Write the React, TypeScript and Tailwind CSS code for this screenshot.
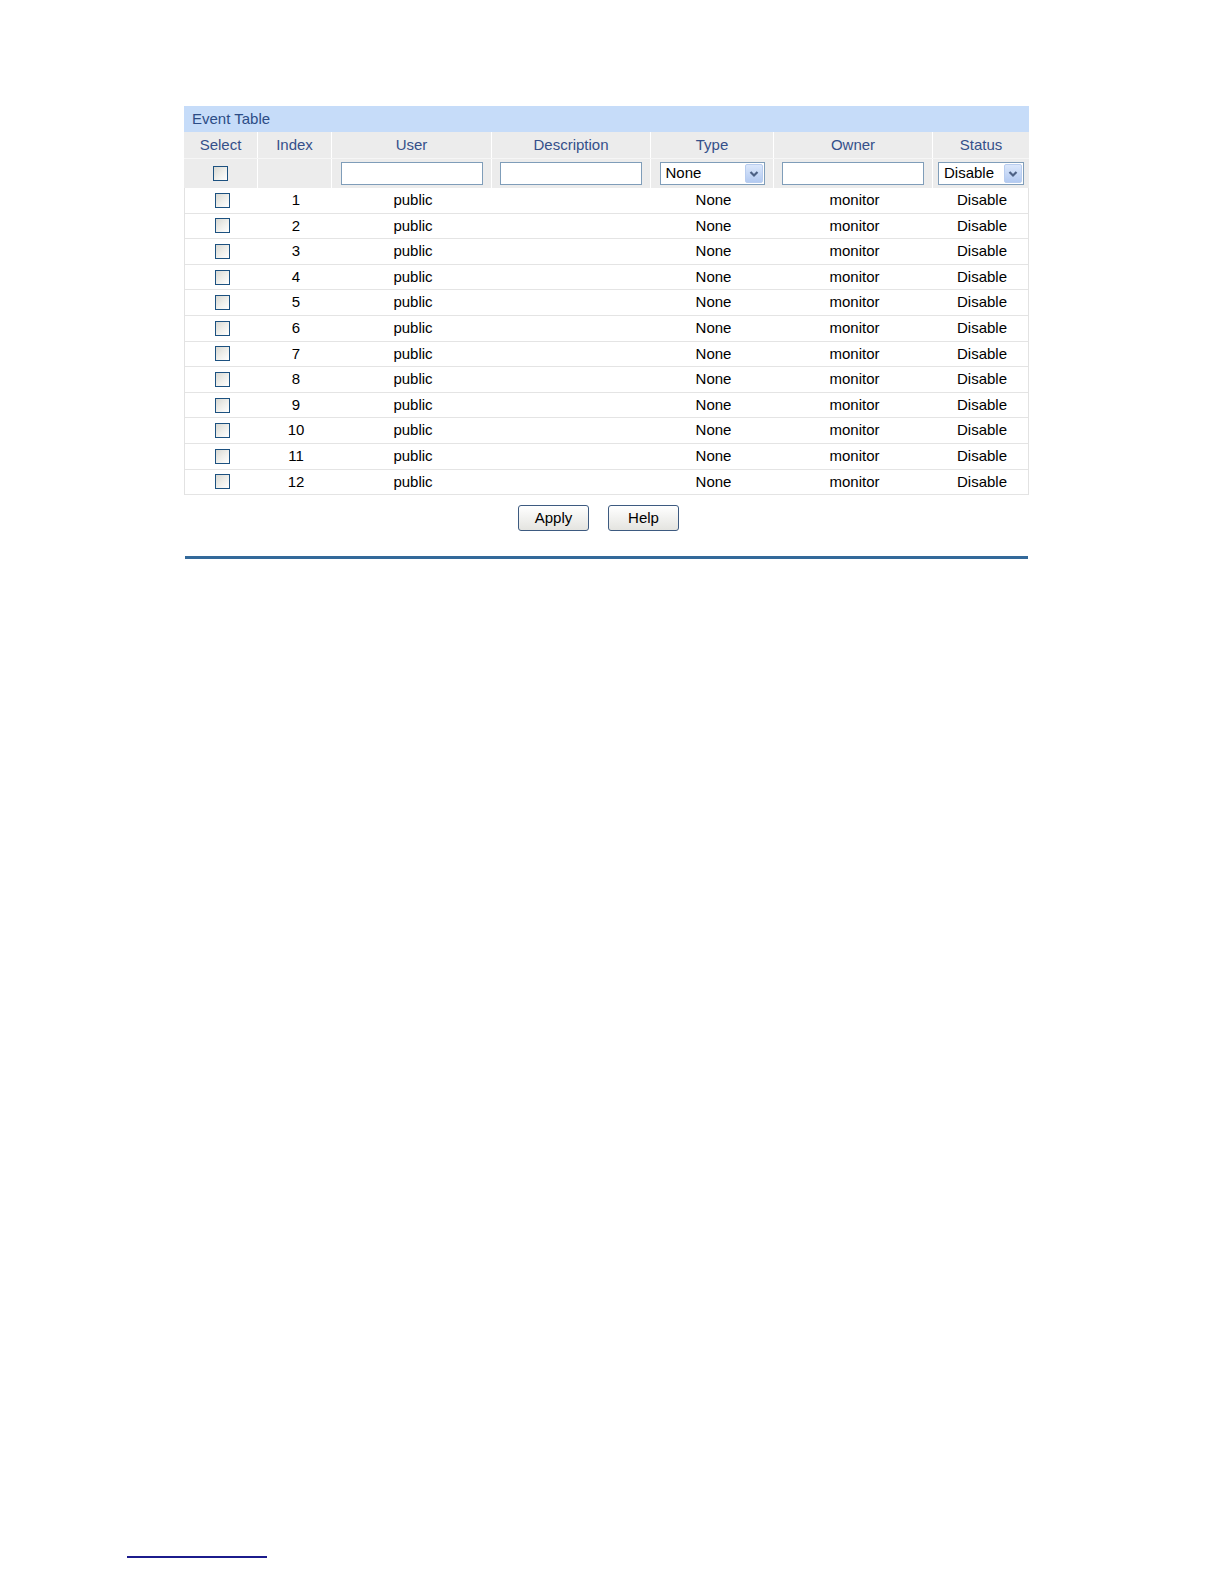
import React from 'react';

const COLS = 'grid grid-cols-[74px_74px_160px_159px_123px_159px_96px]';

const rows = Array.from({ length: 12 }, (_, i) => i + 1);

const CheckBox = () => (
  <span className="inline-block w-[15px] h-[15px] border border-[#1c5180] bg-linear-to-br from-[#d8d8d2] via-[#eeeeea] to-white" />
);

const TextBox = ({ w }: { w: string }) => (
  <div className={`${w} h-[23px] border border-[#7f9db9] bg-white`} />
);

const Arrow = () => (
  <span className="flex items-center justify-center w-[18px] h-[19px] rounded-[2px] bg-linear-to-b from-[#dbe7fb] to-[#b3caf1] border border-[#b9cdef]">
    <svg width="10" height="8" viewBox="0 0 10 8">
      <path d="M1.5 2 L5 5.5 L8.5 2" fill="none" stroke="#4d6185" strokeWidth="2.2" />
    </svg>
  </span>
);

const SelectBox = ({ label, w }: { label: string; w: string }) => (
  <div className={`${w} h-[23px] border border-[#7f9db9] bg-white flex items-center justify-between pl-[5px] pr-[1px]`}>
    <span className="text-black">{label}</span>
    <Arrow />
  </div>
);

const Btn = ({ label }: { label: string }) => (
  <button className="w-[71px] h-[26px] rounded-[3px] border border-[#3d5a80] bg-linear-to-b from-white to-[#e4e4e0] text-black text-[15px]">
    {label}
  </button>
);

export default function App() {
  const headers = ['Select', 'Index', 'User', 'Description', 'Type', 'Owner', 'Status'];
  return (
    <div className="bg-white text-[15px] pt-[106px] flex flex-col" style={{ fontFamily: '"Liberation Sans", Arial, sans-serif' }}>
      <div className="ml-[184px] w-[845px]">
        <div className="h-[26px] bg-[#c6dcf9] text-[#2c4c86] pl-[8px] flex items-center">Event Table</div>
        <div className={`${COLS} h-[26px] bg-[#ececec] text-[#35508a]`}>
          {headers.map((h, i) => (
            <div key={h} className={`flex items-center justify-center ${i < 6 ? 'border-r border-white' : ''}`}>{h}</div>
          ))}
        </div>
        <div className={`${COLS} h-[30px] bg-[#ececec] border-t border-[#f6f6f6]`}>
          <div className="flex items-center justify-center border-r border-white"><CheckBox /></div>
          <div className="border-r border-white" />
          <div className="flex items-center justify-center border-r border-white"><TextBox w="w-[142px]" /></div>
          <div className="flex items-center justify-center border-r border-white"><TextBox w="w-[142px]" /></div>
          <div className="flex items-center justify-center border-r border-white"><SelectBox label="None" w="w-[105px]" /></div>
          <div className="flex items-center justify-center border-r border-white"><TextBox w="w-[142px]" /></div>
          <div className="flex items-center justify-center"><SelectBox label="Disable" w="w-[86px]" /></div>
        </div>
        <div className="border-l border-r border-[#e2e2e2]">
          {rows.map((n) => (
            <div key={n} className={`${COLS} h-[25.6px] border-b border-[#e4e4e4] text-black`}>
              <div className="flex items-center justify-center"><CheckBox /></div>
              <div className="flex items-center justify-center">{n}</div>
              <div className="flex items-center justify-center">public</div>
              <div />
              <div className="flex items-center justify-center">None</div>
              <div className="flex items-center justify-center">monitor</div>
              <div className="flex items-center justify-center">Disable</div>
            </div>
          ))}
        </div>
        <div className="flex justify-center gap-[19px] pt-[10px] pr-[16px]">
          <Btn label="Apply" />
          <Btn label="Help" />
        </div>
        <div className="mt-[25px] ml-[1px] w-[843px] h-[3px] bg-[#33699a]" />
      </div>
      <div className="mt-[997px] ml-[127px] w-[140px] h-[2px] bg-[#1b1b8c]" />
    </div>
  );
}
